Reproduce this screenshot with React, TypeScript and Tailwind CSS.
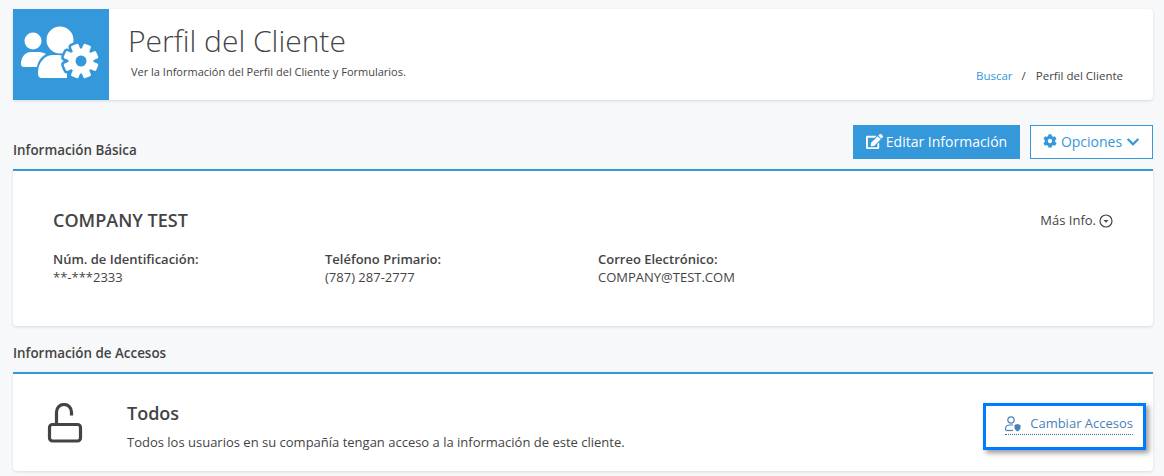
import { FaCog, FaEdit, FaChevronDown } from "react-icons/fa";

const gearTeeth = [0, 45, 90, 135];

function ProfileIcon() {
  return (
    <svg width="96" height="91" viewBox="0 0 96 91" fill="white">
      <circle cx="20" cy="32" r="8.500" />
      <path d="M11 58c-2 0-3-1-3-3 0-7 4-12 10-12h8c3 0 5 1 7 2-5 3-8 7-9 13z" />
      <circle cx="47" cy="31" r="13.500" />
      <path d="M29 69c-3 0-4-2-4-5 0-11 7-18 15-18h5c3 0 6 1 9 2v21z" />
      <g stroke="#3498db" strokeWidth="5">
        <circle cx="68" cy="52" r="12.500" />
        {gearTeeth.map((a) => (
          <rect key={a} x="64" y="34.500" width="8" height="35" rx="1.500" transform={`rotate(${a + 22.5} 68 52)`} />
        ))}
      </g>
      <circle cx="68" cy="52" r="12.500" />
      {gearTeeth.map((a) => (
        <rect key={a} x="64" y="34.500" width="8" height="35" rx="1.500" transform={`rotate(${a + 22.5} 68 52)`} />
      ))}
      <circle cx="68" cy="52" r="5.500" fill="#3498db" />
    </svg>
  );
}

function Field({ label, value, width }: { label: string; value: string; width: string }) {
  return (
    <div className={width}>
      <div className="text-[13px] leading-[18px] font-semibold text-[#444]">{label}</div>
      <div className="text-[13px] leading-[18px] text-[#444]">{value}</div>
    </div>
  );
}

export default function App() {
  return (
    <div className="w-[1164px] h-[476px] overflow-hidden bg-[#f7f8fa] pl-[13px] pt-[9px] pr-[11px] font-['Open_Sans',sans-serif] text-[#444]">
      <header className="flex h-[91px] bg-white rounded-r-sm shadow-[0_1px_3px_rgba(0,0,0,0.12)]">
        <div className="w-[96px] shrink-0 bg-[#3498db]">
          <ProfileIcon />
        </div>
        <div className="flex-1 pl-[19px] pt-[11px]">
          <h1 className="text-[30px] leading-[41px] font-light text-[#444]">Perfil del Cliente</h1>
          <p className="ml-[3px] mt-[4px] text-[11px] leading-[14px] text-[#444]">
            Ver la Información del Perfil del Cliente y Formularios.
          </p>
        </div>
        <div className="flex items-end pr-[30px] pb-[17px] text-[11.5px] leading-[14px]">
          <a className="font-medium text-[#3498db]">Buscar</a>
          <span className="ml-[9px] mr-[10px]">/</span>
          <span>Perfil del Cliente</span>
        </div>
      </header>

      <div className="mt-[25px] flex items-end justify-between">
        <h2 className="text-[13.4px] leading-[18px] font-semibold text-[#444]">Información Básica</h2>
        <div className="flex gap-[10px]">
          <button className="flex h-[34px] w-[167px] items-center justify-center gap-[3px] bg-[#3498db] pb-[2px] text-[14px] font-medium text-white">
            <FaEdit size={17} />
            Editar Información
          </button>
          <button className="flex h-[34px] w-[123px] items-center justify-center gap-1 border border-[#3498db] bg-white pb-[2px] text-[14px] text-[#3498db]">
            <FaCog size={14} />
            Opciones
            <FaChevronDown size={14} className="mt-[2px]" />
          </button>
        </div>
      </div>

      <section className="mt-[10px] h-[157px] border-t-2 border-[#3498db] bg-white px-[40px] pt-[38px] rounded-b-sm shadow-[0_1px_3px_rgba(0,0,0,0.12)]">
        <div className="flex items-center justify-between">
          <div className="text-[18px] leading-[23px] font-[550] text-[#444]">COMPANY TEST</div>
          <div className="flex items-center gap-[3px] text-[13px] text-[#444]">
            Más Info.
            <svg width="14" height="14" viewBox="0 0 14 14" fill="none" stroke="#444" strokeWidth="1.200">
              <circle cx="7" cy="7" r="6" />
              <path d="M4.500 6h5L7 8.800z" fill="#444" stroke="none" />
            </svg>
          </div>
        </div>
        <div className="mt-[18px] flex">
          <Field width="w-[272px]" label="Núm. de Identificación:" value="**-***2333" />
          <Field width="w-[273px]" label="Teléfono Primario:" value="(787) 287-2777" />
          <Field width="w-[273px]" label="Correo Electrónico:" value="COMPANY@TEST.COM" />
        </div>
      </section>

      <h2 className="mt-[18px] text-[13.4px] leading-[18px] font-semibold text-[#444]">Información de Accesos</h2>

      <section className="mt-[10px] flex h-[99px] items-center border-t-2 border-[#3498db] bg-white rounded-b-sm shadow-[0_1px_3px_rgba(0,0,0,0.12)]">
        <div className="ml-[34px] flex w-[80px] shrink-0">
          <svg width="36" height="40" viewBox="0 0 36 40" fill="none" stroke="#444" strokeWidth="3.200">
            <rect x="2.500" y="21.500" width="31" height="16.500" rx="3" />
            <path d="M9.500 21.500V9a7.500 7.500 0 0 1 15 0v3.500" />
          </svg>
        </div>
        <div className="mt-[7px] flex-1">
          <div className="text-[18px] leading-[23px] font-[550] text-[#444]">Todos</div>
          <div className="mt-[8px] text-[13px] leading-[18px]">
            Todos los usuarios en su compañía tengan acceso a la información de este cliente.
          </div>
        </div>
        <div className="mr-[7px] mt-[7px] flex h-[47px] w-[163px] items-center justify-end border-[3px] border-[#007bff] bg-white pb-[3px] pr-[10px] shadow-[3px_3px_5px_rgba(0,0,0,0.4)]">
          <a className="flex items-center gap-[9px] border-b border-dotted border-[#3a6ea5] text-[13px] text-[#4a7fb8]">
            <svg width="16" height="16" viewBox="0 0 16 16" fill="none" stroke="#4a7fb8" strokeWidth="1.200">
              <circle cx="6" cy="4" r="3.200" />
              <path d="M.6 14v-1.500C.6 10.500 2.500 9 4.500 9H8" />
              <path d="M.6 14.500H8" />
              <path d="M9.500 9l3-1 3 1v2.500c0 1.800-1.300 3-3 4-1.700-1-3-2.200-3-4z" fill="#4a7fb8" stroke="none" />
            </svg>
            Cambiar Accesos
          </a>
        </div>
      </section>
    </div>
  );
}
